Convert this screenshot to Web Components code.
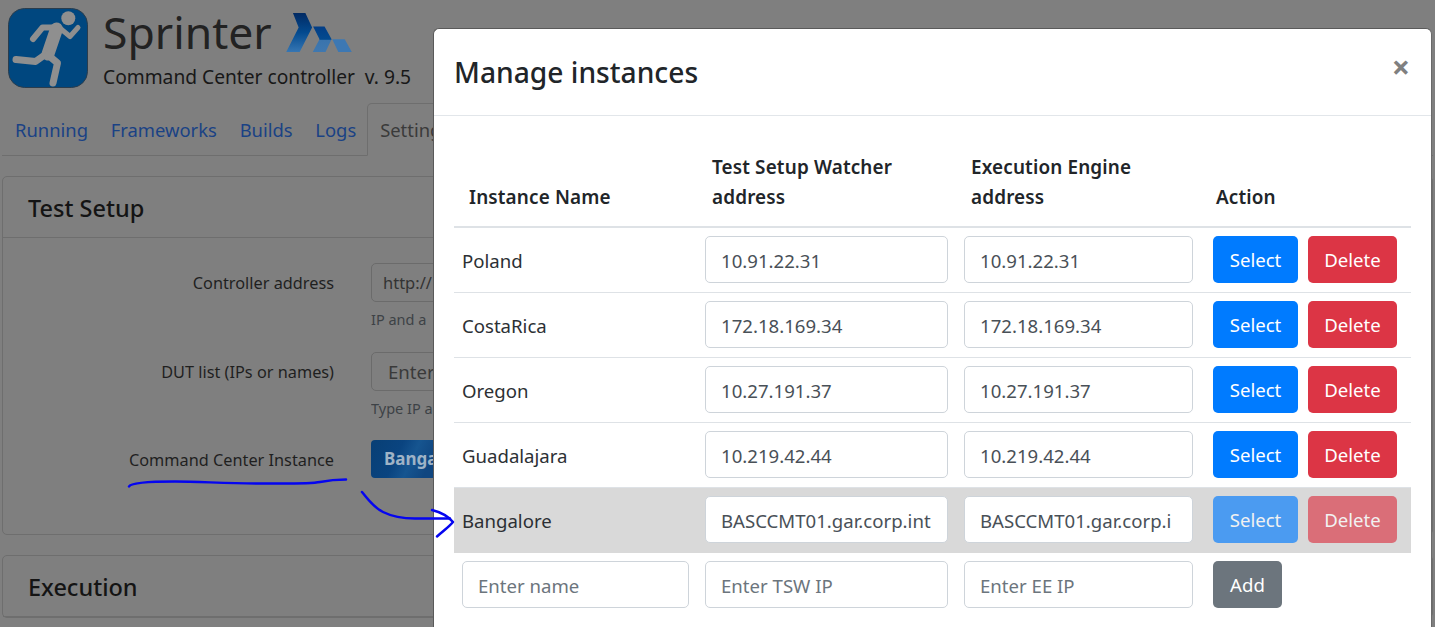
<!DOCTYPE html>
<html lang="en"><head><meta charset="utf-8"><title>Sprinter</title>
<style>
html,body{margin:0;padding:0;height:100%;overflow:hidden;background:#7f7f7f}
body{font-family:"Noto Sans","Open Sans",sans-serif;color:#1c1c1c}
</style></head><body>
<app-root></app-root>
<script>
function def(name, css, html){
  customElements.define(name, class extends HTMLElement{
    constructor(){super();const r=this.attachShadow({mode:'open'});r.innerHTML='<style>'+css+'</style>'+(typeof html==='function'?html(this):html);}
  });
}
def('app-logo',':host{display:block;width:80px;height:80px;flex:none}svg{display:block}',
`<svg width="80" height="80" viewBox="8 8 80 80" aria-hidden="true">
<rect x="8.5" y="8.5" width="79" height="79" rx="16" fill="#00477f" stroke="#2b3d4d"/>
<g fill="none" stroke="#8f8f8f" stroke-linecap="round" stroke-linejoin="round">
<circle cx="68.3" cy="18.3" r="7" fill="#8f8f8f" stroke="none"/>
<path d="M55 27.500H42.500L33 39" stroke-width="6"/>
<path d="M61 29l9 7.500 8-9" stroke-width="5"/>
<path d="M56.500 29L48 54" stroke-width="13"/>
<path d="M46 54L35.500 61.500 16 59.500" stroke-width="7"/>
<path d="M48 55L57.500 63 53 83" stroke-width="7"/>
</g></svg>`);
def('brand-mark',':host{display:block;flex:none}svg{display:block}',
`<svg width="66" height="39" viewBox="48 42 195 116" aria-hidden="true">
<defs><linearGradient id="g" x1="0" y1="0" x2="0" y2="1"><stop offset="0" stop-color="#022a63"/><stop offset=".5" stop-color="#034a8f"/><stop offset="1" stop-color="#3676b3"/></linearGradient>
<linearGradient id="h" gradientUnits="userSpaceOnUse" x1="0" y1="82" x2="0" y2="158"><stop offset="0" stop-color="#033e86"/><stop offset=".5" stop-color="#034a8f"/><stop offset=".55" stop-color="#3a74ad"/><stop offset="1" stop-color="#3f78b0"/></linearGradient></defs>
<path fill="url(#g)" d="M68 42h37l20 43-37 73H48l37-73z"/>
<path fill="url(#h)" d="M128 82h34l21 38-18 38h-38l20-38z"/>
<path fill="#3d78b3" d="M185 120h37l21 38h-40z"/>
</svg>`);
def('app-header',`:host{display:flex;padding:8px;gap:15px;height:80px}
.t{display:flex;flex-direction:column}
.top{display:flex;align-items:center;gap:14px;height:50px;margin-top:-1px}
h1{margin:0;font-weight:400;font-size:44.500px;line-height:50px;color:#222}
p{margin:0;margin-top:8px;font-size:19.200px;line-height:24px;color:#181818;white-space:pre}`,
`<app-logo></app-logo><div class="t"><div class="top"><h1>Sprinter</h1><brand-mark></brand-mark></div><p>Command Center controller  v. 9.5</p></div>`);
def('app-tabs',`:host{display:flex;margin:7px 2px 0;height:52px;border-bottom:1px solid #6e6e6e;box-sizing:content-box}
.i{padding:0 11.400px;line-height:54px;font-size:18.400px;color:#1a4285;white-space:nowrap}
.i:first-of-type{padding-left:13px}
.a{border:1px solid #6e6e6e;border-bottom:1px solid #7f7f7f;border-radius:5px 5px 0 0;margin:0 0 -1px -.5px;color:#3a3a3a;padding:0 12px;line-height:52px}`,
`<span class="i">Running</span><span class="i">Frameworks</span><span class="i">Builds</span><span class="i">Logs</span><span class="i a">Settings</span>`);
def('app-card',`:host{display:block;margin:20px 2px 0;border:1px solid #6e6e6e;border-radius:5px;background:#7f7f7f}
header{height:60px;padding-left:25px;border-bottom:1px solid #6e6e6e;font-size:23.500px;font-weight:500;line-height:62px;color:#141414}
.b{padding:25px 0 0;min-height:var(--b,270px);box-sizing:border-box}
:host([compact]) .b{display:none}`,
el=>`<header>${el.getAttribute('title')}</header><div class="b"><slot></slot></div>`);
def('form-field',`:host{display:grid;grid-template-columns:331px 1fr;column-gap:37px;height:88px;align-items:start}
label{font-size:16.300px;line-height:40px;text-align:right;color:#1f1f1f;white-space:nowrap}
.c{overflow:hidden;min-width:0}
small{display:block;font-size:14.500px;line-height:24px;margin-top:5px;color:#3d4246;white-space:nowrap}`,
el=>`<label>${el.getAttribute('label')}</label><div class="c"><slot></slot><small>${el.getAttribute('help')||''}</small></div>`);
def('dim-input',`:host{display:block;width:700px;height:39px;box-sizing:border-box;border:1px solid #6b6b6b;border-radius:5px;padding:0 11px;font-size:16.500px;line-height:37px;color:#333;white-space:nowrap}`,'<slot></slot>');
def('dim-select',`:host{display:block;width:300px;height:38px;box-sizing:border-box;border-radius:4px;padding:0 13px;font-size:17px;font-weight:700;line-height:38px;color:#9fb3c6;white-space:nowrap;background:linear-gradient(115deg,#083f75 0,#0a4480 30px,#165590 45px,#104680 63px,#104680 100%)}`,'<slot></slot>');
def('text-box',`:host{display:block;box-sizing:border-box;height:47px;width:var(--w);border:1px solid #ced4da;border-radius:5px;background:#fff;padding:0 15px;font-size:18.600px;line-height:47px;color:#495057}
:host([placeholder]){color:#6c757d}
div{overflow:hidden;white-space:nowrap;height:45px}`,'<div><slot></slot></div>');
def('action-btn',`:host{display:inline-block;box-sizing:border-box;height:47px;border-radius:5px;font-size:18.600px;line-height:48px;color:#fff;text-align:center;width:var(--bw);background:var(--bg)}
:host([kind=select]){--bg:#007bff;--bw:85px}
:host([kind=delete]){--bg:#dc3545;--bw:89px}
:host([kind=add]){--bg:#6c757d;--bw:69px}
:host([disabled]){opacity:.65}`,'<slot></slot>');
def('instance-row',`:host{display:grid;grid-template-columns:243px 259px 245px 1fr;height:64px;border-bottom:1px solid #dee2e6;box-sizing:content-box;align-items:center;font-size:18.600px;color:#2c3034}
:host([current]){background:#d9d9d9;border-bottom-color:#d9d9d9}
:host([last]){border-bottom:0}
.n{padding-left:8px}.a{padding-left:8px;--w:243px}.c{padding-left:8px;--w:229px}.b{padding-left:12px;display:flex;gap:10px}
.n ::slotted(text-box){--w:227px}
.a,.c,.b{margin-bottom:2px}
:host([last]) .n{margin-bottom:2px}`,
`<div class="n"><slot name="name"></slot></div><div class="a"><slot name="tsw"></slot></div><div class="c"><slot name="ee"></slot></div><div class="b"><slot name="act"></slot></div>`);
def('table-head',`:host{display:grid;grid-template-columns:243px 259px 245px 1fr;align-items:end;border-bottom:2px solid #dee2e6;padding-bottom:14px;font-size:18.900px;font-weight:600;letter-spacing:.15px;line-height:30px;color:#212529}
div{padding-left:15px}`,
`<div>Instance Name</div><div>Test Setup Watcher<br>address</div><div>Execution Engine<br>address</div><div>Action</div>`);
def('modal-dialog',`:host{position:absolute;left:433px;top:28px;width:999px;height:640px;box-sizing:border-box;border:1px solid #5a5a5a;border-right-color:#6a6a6a;border-radius:6px;background:#fff}
header{display:flex;justify-content:space-between;height:86px;border-bottom:1px solid #e2e6ea;padding:0 21px 0 20px}
h2{margin:0;font-weight:500;font-size:28.200px;line-height:86px;color:#212529}
.x{font-size:32px;font-weight:700;line-height:76px;color:#808080}
.b{padding:36px 20px 0}`,
`<header><h2>Manage instances</h2><span class="x">×</span></header><div class="b"><slot></slot></div>`);
def('ink-notes',`:host{position:absolute;left:0;top:0;width:1435px;height:627px;pointer-events:none}svg{display:block}`,
`<svg width="1435" height="627" viewBox="0 0 1435 627" aria-hidden="true"><g fill="none" stroke="#0505f0" stroke-width="2.500" stroke-linecap="round" stroke-linejoin="round">
<path d="M129 486.500C131 482.500 150 481.500 175 481.500C200 481.500 225 483.500 260 483.500C290 483.500 310 484 320 482C330 480 338 479.500 346 479.500"/>
<path d="M362 492C368 499 373 507 383 512C393 517 405 518.500 415 518.500L450 518.500"/>
<path d="M432 510C440 512 447 515 453 522C449 527 443 531 437 536.500"/>
</g></svg>`);
def('app-root',`:host{display:block;width:1435px;height:627px;position:relative;overflow:hidden}`,
`<app-header></app-header>
<app-tabs></app-tabs>
<app-card title="Test Setup" style="--b:296px">
<form-field style="height:89px" label="Controller address" help="IP and a"><dim-input>http://</dim-input></form-field>
<form-field label="DUT list (IPs or names)" help="Type IP a"><dim-input style="padding-left:16px;font-size:18.600px;color:#3a3a3a">Enter</dim-input></form-field>
<form-field label="Command Center Instance"><dim-select>Banga</dim-select></form-field>
</app-card>
<app-card title="Execution" compact></app-card>
<modal-dialog>
<table-head></table-head>
${[['Poland','10.91.22.31','10.91.22.31'],['CostaRica','172.18.169.34','172.18.169.34'],['Oregon','10.27.191.37','10.27.191.37'],['Guadalajara','10.219.42.44','10.219.42.44'],['Bangalore','BASCCMT01.gar.corp.int','BASCCMT01.gar.corp.i',1]].map(r=>`<instance-row${r[3]?' current':''}>
<span slot="name">${r[0]}</span><text-box slot="tsw">${r[1]}</text-box><text-box slot="ee">${r[2]}</text-box>
<action-btn slot="act" kind="select"${r[3]?' disabled':''}>Select</action-btn><action-btn slot="act" kind="delete"${r[3]?' disabled':''}>Delete</action-btn></instance-row>`).join('')}
<instance-row last><text-box slot="name" placeholder>Enter name</text-box><text-box slot="tsw" placeholder>Enter TSW IP</text-box><text-box slot="ee" placeholder>Enter EE IP</text-box><action-btn slot="act" kind="add">Add</action-btn></instance-row>
</modal-dialog>
<ink-notes></ink-notes>`);
</script>
</body></html>
